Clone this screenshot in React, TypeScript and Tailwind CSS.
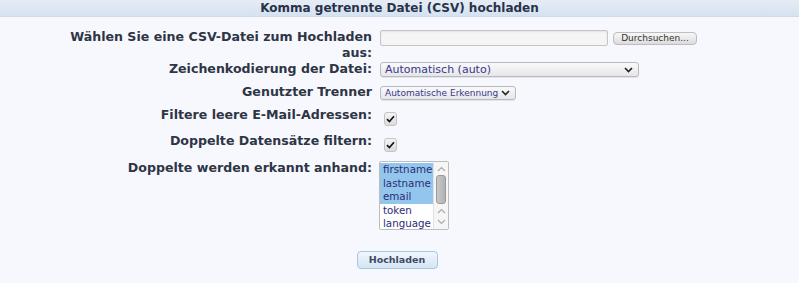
import React from 'react';

const FONT = "font-['DejaVu_Sans',_'Liberation_Sans',_sans-serif]";

const LIST_ITEMS = [
  { name: 'firstname', selected: true },
  { name: 'lastname', selected: true },
  { name: 'email', selected: true },
  { name: 'token', selected: false },
  { name: 'language', selected: false },
];

function Chevron({ className = '' }: { className?: string }) {
  return (
    <svg width="9" height="6" viewBox="0 0 9 6" className={className}>
      <path d="M1 1 L4.5 4.5 L8 1" fill="none" stroke="#222" strokeWidth="1.6" />
    </svg>
  );
}

function FakeSelect({ value, width, height, text }: { value: string; width: string; height: string; text: string }) {
  return (
    <div
      className={`relative flex items-center ${width} ${height} ${text} rounded-[3px] border border-[#b9b9bf] bg-gradient-to-b from-[#fafafa] to-[#e6e6ea] pl-[4px] leading-none whitespace-nowrap text-[#38388a] shadow-[0_1px_0_rgba(0,0,0,0.08)]`}
    >
      <span>{value}</span>
      <Chevron className="absolute right-[5px] top-1/2 -translate-y-1/2" />
    </div>
  );
}

function Check() {
  return (
    <div className="flex h-[14px] w-[13px] items-center justify-center rounded-[3px] border border-[#c4c4c4] bg-gradient-to-b from-[#f4f4f4] to-[#dcdcdc]">
      <svg width="9" height="8" viewBox="0 0 9 8">
        <path d="M1 4.2 L3.4 6.5 L8 1.2" fill="none" stroke="#111" strokeWidth="1.6" />
      </svg>
    </div>
  );
}

function Row({ label, height, children }: { label: React.ReactNode; height: string; children: React.ReactNode }) {
  return (
    <div className={`flex ${height}`}>
      <div className="w-[372px] shrink-0 pl-[50px] text-right text-[12.6px] font-bold leading-4 text-[#2e3545]">
        {label}
      </div>
      <div className="ml-2 flex items-start">{children}</div>
    </div>
  );
}

export default function App() {
  return (
    <div className={`min-h-[283px] w-[799px] bg-[#f7f8fd] ${FONT}`}>
      <div className="h-[17px] border-b border-[#d0dbe8] bg-gradient-to-b from-[#e6ecf6] to-[#d5e2f0] text-center text-[12px] font-bold leading-[17px] text-[#28324a]">
        Komma getrennte Datei (CSV) hochladen
      </div>

      <div className="pt-[12px]">
        <Row label="Wählen Sie eine CSV-Datei zum Hochladen aus:" height="h-[32px]">
          <div className="mt-[1px] h-[16px] w-[228px] rounded-[2px] border border-[#c6c6c6] bg-[#f5f5f5] shadow-[inset_0_1px_2px_rgba(0,0,0,0.08)]" />
          <div className="ml-[5px] mt-[3px] flex h-[13px] w-[84px] items-center justify-center rounded-[4px] border border-[#bdbdbd] bg-gradient-to-b from-[#f7f7f7] to-[#dcdcdc] text-[9px] leading-none text-[#333]">
            Durchsuchen...
          </div>
        </Row>

        <Row label="Zeichenkodierung der Datei:" height="h-[23px]">
          <div className="mt-[1px]">
            <FakeSelect value="Automatisch (auto)" width="w-[259px]" height="h-[15px]" text="text-[11px]" />
          </div>
        </Row>

        <Row label="Genutzter Trenner" height="h-[23px]">
          <div className="mt-[2px]">
            <FakeSelect value="Automatische Erkennung" width="w-[136px]" height="h-[14px]" text="text-[9px]" />
          </div>
        </Row>

        <Row label="Filtere leere E-Mail-Adressen:" height="h-[26px]">
          <div className="ml-[4px] mt-[5px]">
            <Check />
          </div>
        </Row>

        <Row label="Doppelte Datensätze filtern:" height="h-[27px]">
          <div className="ml-[4px] mt-[5px]">
            <Check />
          </div>
        </Row>

        <Row label="Doppelte werden erkannt anhand:" height="h-[80px]">
          <div className="-ml-[1px] mt-[1px] flex h-[69px] w-[70px] overflow-hidden rounded-[2px] border border-[#bdbdbd] bg-white">
            <div className="flex-1 pt-[1px]">
              {LIST_ITEMS.map(item => (
                <div
                  key={item.name}
                  className={`h-[13.5px] pl-[3px] text-[10.3px] leading-[13.5px] text-[#2c2c78] ${item.selected ? 'bg-[#93c6ec]' : ''}`}
                >
                  {item.name}
                </div>
              ))}
            </div>
            <div className="relative w-[15px] shrink-0 border-l border-[#e2e2e2] bg-[#f6f6f6]">
              <svg width="9" height="6" viewBox="0 0 9 6" className="absolute left-[3px] top-[4px]">
                <path d="M1 5 L4.5 1.5 L8 5" fill="none" stroke="#aaa" strokeWidth="1.2" />
              </svg>
              <div className="absolute left-[2px] top-[13px] h-[29px] w-[10px] rounded-[3px] border border-[#9a9a9a] bg-gradient-to-r from-[#c8c8c8] to-[#b2b2b2]" />
              <svg width="9" height="6" viewBox="0 0 9 6" className="absolute left-[3px] top-[46px]">
                <path d="M1 5 L4.5 1.5 L8 5" fill="none" stroke="#aaa" strokeWidth="1.2" />
              </svg>
              <svg width="9" height="6" viewBox="0 0 9 6" className="absolute left-[3px] top-[57px]">
                <path d="M1 1 L4.5 4.5 L8 1" fill="none" stroke="#aaa" strokeWidth="1.2" />
              </svg>
            </div>
          </div>
        </Row>

        <div className="mt-[11px] flex justify-center pr-[5px]">
          <div className="flex h-[18px] w-[81px] items-center justify-center rounded-[4px] border border-[#a9c7e2] bg-gradient-to-b from-[#f0f6fd] to-[#d5e5f4] text-[9.5px] font-bold leading-none text-[#3d4a66]">
            Hochladen
          </div>
        </div>
      </div>
    </div>
  );
}
